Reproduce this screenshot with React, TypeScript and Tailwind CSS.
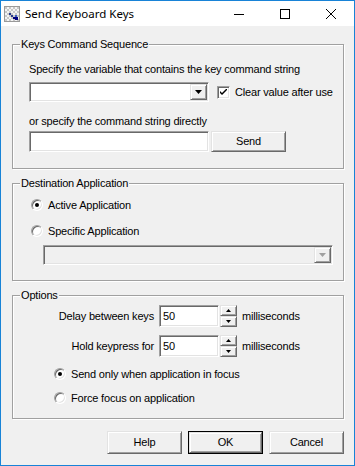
import React from "react";

const sunken =
  "border border-t-[#a0a0a0] border-l-[#a0a0a0] border-r-white border-b-white shadow-[inset_1px_1px_0_#696969,inset_-1px_-1px_0_#e3e3e3]";
const raised =
  "border border-t-[#e3e3e3] border-l-[#e3e3e3] border-r-[#696969] border-b-[#696969] shadow-[inset_1px_1px_0_#ffffff,inset_-1px_-1px_0_#a0a0a0] bg-[#f0f0f0]";

function AppIcon() {
  // little checkered window icon
  const cells: React.ReactNode[] = [];
  for (let y = 0; y < 7; y++) {
    for (let x = 0; x < 7; x++) {
      if ((x + y) % 2 === 0) {
        cells.push(<rect key={`${x}-${y}`} x={1 + x * 2} y={1 + y * 2} width={2} height={2} fill="#c8c8c8" />);
      }
    }
  }
  return (
    <svg width="16" height="16" viewBox="0 0 16 16">
      <rect x="0.5" y="0.5" width="15" height="15" fill="#f4f4f4" stroke="#9a9a9a" />
      {cells}
      <rect x="5" y="7" width="2" height="2" fill="#2a3a8a" />
      <rect x="7" y="9" width="2" height="2" fill="#2a3a8a" />
      <rect x="9" y="11" width="2" height="2" fill="#000080" />
      <rect x="11" y="9" width="2" height="2" fill="#4060c0" />
      <rect x="11" y="11" width="3" height="3" fill="#000080" />
    </svg>
  );
}

function DownArrow({ color = "#000" }: { color?: string }) {
  return (
    <svg width="7" height="4" viewBox="0 0 7 4">
      <polygon points="0,0 7,0 3.5,4" fill={color} />
    </svg>
  );
}

function Combo({ width, disabled }: { width: string; disabled?: boolean }) {
  return (
    <div className={`${width} h-[20px] flex ${sunken} ${disabled ? "bg-[#f0f0f0]" : "bg-white"} p-[1px]`}>
      <div className="flex-1" />
      <div className={`w-[17px] h-full flex items-center justify-center ${raised}`}>
        <DownArrow color={disabled ? "#a0a0a0" : "#000"} />
      </div>
    </div>
  );
}

function Radio({ checked, label }: { checked?: boolean; label: string }) {
  return (
    <div className="flex items-center h-[14px] leading-[14px]">
      <div className="w-[12px] h-[12px] rounded-full border border-t-[#a0a0a0] border-l-[#a0a0a0] border-r-white border-b-white bg-white shadow-[inset_1px_1px_0_#696969,inset_-1px_-1px_0_#e3e3e3] flex items-center justify-center">
        {checked && <div className="w-[4px] h-[4px] rounded-full bg-black" />}
      </div>
      <span className="ml-[5px]">{label}</span>
    </div>
  );
}

function Spin() {
  return (
    <div className="flex flex-col w-[17px] h-[22px] ml-[1px]">
      <div className={`h-[11px] flex items-center justify-center ${raised}`}>
        <svg width="5" height="3" viewBox="0 0 5 3">
          <polygon points="2.5,0 5,3 0,3" fill="#000" />
        </svg>
      </div>
      <div className={`h-[11px] flex items-center justify-center ${raised}`}>
        <svg width="5" height="3" viewBox="0 0 5 3">
          <polygon points="0,0 5,0 2.5,3" fill="#000" />
        </svg>
      </div>
    </div>
  );
}

function Group({ title, className, children }: { title: string; className: string; children: React.ReactNode }) {
  return (
    <div className={`relative ml-[11px] w-[332px] border border-[#a0a0a0] shadow-[inset_1px_1px_0_#ffffff,1px_1px_0_#ffffff] ${className}`}>
      <span className="absolute -top-[8px] left-[7px] bg-[#f0f0f0] px-[1px] leading-[14px]">{title}</span>
      {children}
    </div>
  );
}

function SpinRow({ label, value }: { label: string; value: string }) {
  return (
    <div className="flex items-center h-[22px]">
      <span className="w-[141px] text-right">{label}</span>
      <div className={`ml-[5px] w-[60px] h-[22px] bg-white ${sunken} flex items-center pl-[3px]`}>{value}</div>
      <Spin />
      <span className="ml-[5px]">milliseconds</span>
    </div>
  );
}

export default function App() {
  return (
    <div className="w-[355px] h-[466px] border border-[#1883d7] bg-[#f0f0f0] flex flex-col text-[11px] tracking-[-0.18px] text-black font-['Liberation_Sans',Arial,sans-serif] select-none">
      {/* title bar */}
      <div className="h-[25px] bg-white flex items-center shrink-0">
        <div className="ml-[3px]">
          <AppIcon />
        </div>
        <span className="ml-[5px] text-[11.5px] tracking-normal font-['Noto_Sans','Liberation_Sans',sans-serif]">Send Keyboard Keys</span>
        <div className="ml-auto flex h-full">
          <div className="w-[46px] h-full flex items-center justify-center">
            <svg width="10" height="10" viewBox="0 0 10 10">
              <line x1="0" y1="5.5" x2="10" y2="5.5" stroke="#000" strokeWidth="1" />
            </svg>
          </div>
          <div className="w-[46px] h-full flex items-center justify-center">
            <svg width="10" height="10" viewBox="0 0 10 10">
              <rect x="0.5" y="0.5" width="9" height="9" fill="none" stroke="#000" strokeWidth="1" />
            </svg>
          </div>
          <div className="w-[46px] h-full flex items-center justify-center">
            <svg width="10" height="10" viewBox="0 0 10 10">
              <path d="M0,0 L10,10 M10,0 L0,10" stroke="#000" strokeWidth="1" />
            </svg>
          </div>
        </div>
      </div>

      {/* Keys Command Sequence */}
      <Group title="Keys Command Sequence" className="mt-[18px] h-[125px]">
        <div className="flex flex-col pl-[16px] pt-[17px]">
          <div className="leading-[14px]">Specify the variable that contains the key command string</div>
          <div className="flex items-center mt-[6px]">
            <Combo width="w-[180px]" />
            <div className={`ml-[8px] w-[13px] h-[13px] bg-white ${sunken} flex items-center justify-center`}>
              <svg width="7" height="7" viewBox="0 0 7 7">
                <path d="M0,2 L0,4 L2,6 L7,1 L7,-1 L2,4 Z" fill="#000" />
              </svg>
            </div>
            <span className="ml-[5px]">Clear value after use</span>
          </div>
          <div className="leading-[14px] mt-[12px]">or specify the command string directly</div>
          <div className="flex items-center mt-[3px]">
            <div className={`w-[180px] h-[21px] bg-white ${sunken}`} />
            <button className={`ml-[2px] w-[75px] h-[21px] ${raised}`}>Send</button>
          </div>
        </div>
      </Group>

      {/* Destination Application */}
      <Group title="Destination Application" className="mt-[14px] h-[98px]">
        <div className="flex flex-col pl-[18px] pt-[14px]">
          <Radio checked label="Active Application" />
          <div className="mt-[12px]">
            <Radio label="Specific Application" />
          </div>
          <div className="mt-[7px] ml-[12px]">
            <Combo width="w-[290px]" disabled />
          </div>
        </div>
      </Group>

      {/* Options */}
      <Group title="Options" className="mt-[14px] h-[124px]">
        <div className="flex flex-col pt-[9px]">
          <SpinRow label="Delay between keys" value="50" />
          <div className="mt-[8px]">
            <SpinRow label="Hold keypress for" value="50" />
          </div>
          <div className="pl-[41px] mt-[10px]">
            <Radio checked label="Send only when application in focus" />
          </div>
          <div className="pl-[41px] mt-[10px]">
            <Radio label="Force focus on application" />
          </div>
        </div>
      </Group>

      {/* buttons */}
      <div className="flex justify-end gap-[6px] pr-[10px] mt-[12px]">
        <button className={`w-[75px] h-[23px] ${raised}`}>Help</button>
        <div className="w-[75px] h-[23px] border border-black">
          <button className={`w-full h-full ${raised}`}>OK</button>
        </div>
        <button className={`w-[75px] h-[23px] ${raised}`}>Cancel</button>
      </div>
    </div>
  );
}
